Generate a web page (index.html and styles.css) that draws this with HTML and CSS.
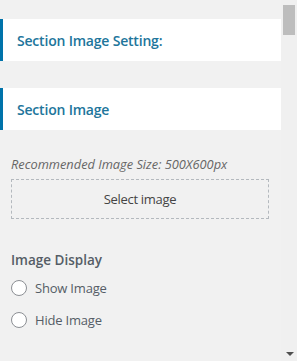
FILE: index.html
```html
<!DOCTYPE html>
<html>
<head>
    <title>Section Image</title>
    <link rel="stylesheet" href="styles.css">
</head>
<body>

<div class="frame">
    <div class="panel">
        <div class="section-title">Section Image Setting:</div>
        <div class="section-title second">Section Image</div>

        <div class="control">
            <span class="description">Recommended Image Size: 500X600px</span>
            <button class="select-button">Select image</button>
        </div>

        <div class="control radios">
            <span class="control-title">Image Display</span>
            <label class="radio">
                <input type="radio" name="imageDisplay" value="show">
                <span class="circle"></span>
                Show Image
            </label>
            <label class="radio">
                <input type="radio" name="imageDisplay" value="hide">
                <span class="circle"></span>
                Hide Image
            </label>
        </div>
    </div>
    <div class="scrollbar">
        <div class="thumb"></div>
        <div class="arrow"></div>
    </div>
</div>

</body>
</html>
```

FILE: styles.css
```css
body {
    margin: 0;
    background-color: #f1f1f1;
    font-family: "Open Sans", Arial, sans-serif;
}

.frame {
    display: flex;
    width: 297px;
    height: 361px;
    overflow: hidden;
}

.panel {
    width: 281px;
    padding-top: 19px;
}

.section-title {
    height: 42px;
    box-sizing: border-box;
    display: flex;
    align-items: center;
    padding-left: 14px;
    border-left: 3px solid #0073aa;
    background-color: white;
    color: #21759b;
    font-size: 14px;
    font-weight: 600;
    letter-spacing: -0.2px;
}

.section-title.second {
    margin-top: 27px;
}

.control {
    padding: 0 12px 0 11px;
}

.description {
    display: block;
    margin-top: 25px;
    font-size: 12.8px;
    font-style: italic;
    color: #666;
    line-height: 18px;
}

.select-button {
    display: block;
    width: 258px;
    height: 40px;
    margin-top: 6px;
    border: 1px dashed #b4b9be;
    background: transparent;
    font-family: inherit;
    font-size: 13px;
    letter-spacing: -0.3px;
    color: #444;
}

.radios {
    margin-top: 31px;
}

.control-title {
    display: block;
    margin-bottom: 2px;
    font-size: 13.5px;
    font-weight: 600;
    color: #555d66;
    line-height: 20px;
}

.radio {
    display: flex;
    align-items: center;
    gap: 8px;
    height: 32px;
    font-size: 13px;
    letter-spacing: -0.2px;
    color: #555d66;
}

.radio input {
    display: none;
}

.circle {
    width: 16px;
    height: 16px;
    box-sizing: border-box;
    border: 1px solid #8c8f94;
    border-radius: 50%;
    background-color: white;
}

.scrollbar {
    position: relative;
    width: 16px;
    background-color: #f0f0f0;
}

.thumb {
    margin: 5px 2px 0 2px;
    height: 30px;
    background-color: #bdbdbd;
}

.arrow {
    position: absolute;
    left: 5px;
    bottom: 5px;
    width: 0;
    height: 0;
    border-left: 4px solid transparent;
    border-right: 4px solid transparent;
    border-top: 4px solid #505050;
}
```
